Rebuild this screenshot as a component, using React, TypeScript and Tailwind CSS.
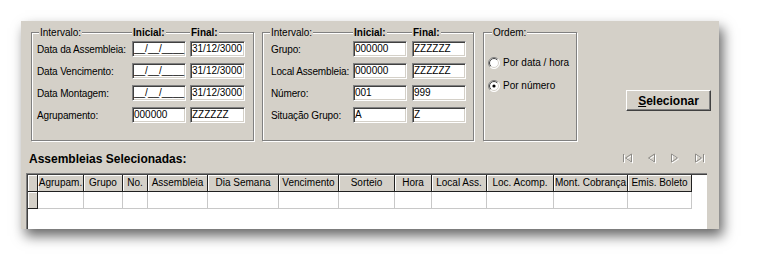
import React from 'react';

const fieldBox =
    'h-[16px] bg-white border border-[#808080] border-b-white border-r-white shadow-[inset_1px_1px_0_#404040,inset_-1px_-1px_0_#d4d0c8] pl-[1px] leading-[13px] text-[10px] overflow-hidden whitespace-nowrap';

const groupBox = 'border border-[#808080] shadow-[inset_1px_1px_0_#fff,1px_1px_0_#fff] h-[109px]';

const Field = ({ value }: { value: string }) => <div className={fieldBox}>{value}</div>;

const Label = ({ children }: { children: React.ReactNode }) => (
    <span className="whitespace-nowrap tracking-[-0.15px]">{children}</span>
);

const Legend = ({ children, bold }: { children: React.ReactNode; bold?: boolean }) => (
    <span className={`w-fit bg-[#d4d0c8] px-[1px] ${bold ? 'font-bold' : ''}`}>{children}</span>
);

const Radio = ({ checked }: { checked?: boolean }) => (
    <svg width="12" height="12" viewBox="0 0 12 12">
        <defs>
            <linearGradient id="ro" x1="0" y1="0" x2="1" y2="1">
                <stop offset="0.45" stopColor="#808080" />
                <stop offset="0.55" stopColor="#ffffff" />
            </linearGradient>
            <linearGradient id="ri" x1="0" y1="0" x2="1" y2="1">
                <stop offset="0.45" stopColor="#404040" />
                <stop offset="0.55" stopColor="#d4d0c8" />
            </linearGradient>
        </defs>
        <circle cx="6" cy="6" r="5.5" fill="white" stroke="url(#ro)" strokeWidth="1" />
        <circle cx="6" cy="6" r="4.5" fill="white" stroke="url(#ri)" strokeWidth="1" />
        {checked && <circle cx="6" cy="6" r="1.6" fill="black" />}
    </svg>
);

const NavIcon = ({ kind }: { kind: 'first' | 'prev' | 'next' | 'last' }) => {
    const shapes: Record<string, React.ReactNode> = {
        first: (
            <>
                <path d="M1.5 1 V9" />
                <path d="M9.5 1 L3.5 5 L9.5 9 Z" />
            </>
        ),
        prev: <path d="M8.5 1 L2.5 5 L8.5 9 Z" />,
        next: <path d="M1.5 1 L7.5 5 L1.5 9 Z" />,
        last: (
            <>
                <path d="M1.5 1 L7.5 5 L1.5 9 Z" />
                <path d="M9.5 1 V9" />
            </>
        ),
    };
    return (
        <svg width="11" height="11" viewBox="0 0 11 11" fill="none">
            <g stroke="#ffffff" transform="translate(1 1)">{shapes[kind]}</g>
            <g stroke="#8c8a86">{shapes[kind]}</g>
        </svg>
    );
};

const columns: [string, number][] = [
    ['Agrupam.', 46],
    ['Grupo', 39],
    ['No.', 25],
    ['Assembleia', 60],
    ['Dia Semana', 71],
    ['Vencimento', 60],
    ['Sorteio', 56],
    ['Hora', 37],
    ['Local Ass.', 55],
    ['Loc. Acomp.', 67],
    ['Mont. Cobrança', 74],
    ['Emis. Boleto', 64],
];

export default function App() {
    return (
        <div className="min-h-screen bg-white pt-[21px] pl-[21px] font-['Liberation_Sans',Arial,sans-serif] text-[10px] text-black">
            <div className="w-[698px] h-[208px] bg-[#d4d0c8] shadow-[4px_7px_12px_rgba(0,0,0,0.6)] flex flex-col overflow-hidden">
                <div className="flex pt-[11px] pl-[10px]">
                    {/* Intervalo de datas */}
                    <div className={`${groupBox} w-[223px] pl-[5px]`}>
                        <div className="grid grid-cols-[91px_54px_55px] gap-x-[4px] -mt-[7px] h-[13px] leading-[13px]">
                            <span className="ml-[2px] w-fit bg-[#d4d0c8] px-[1px]">Intervalo:</span>
                            <Legend bold>Inicial:</Legend>
                            <Legend bold>Final:</Legend>
                        </div>
                        <div className="grid grid-cols-[91px_54px_55px] gap-x-[4px] gap-y-[6px] mt-[2px] items-center">
                            <Label>Data da Assembleia:</Label>
                            <Field value="__/__/____" />
                            <Field value="31/12/3000" />
                            <Label>Data Vencimento:</Label>
                            <Field value="__/__/____" />
                            <Field value="31/12/3000" />
                            <Label>Data Montagem:</Label>
                            <Field value="__/__/____" />
                            <Field value="31/12/3000" />
                            <Label>Agrupamento:</Label>
                            <Field value="000000" />
                            <Field value="ZZZZZZ" />
                        </div>
                    </div>

                    {/* Intervalo de grupos */}
                    <div className={`${groupBox} ml-[8px] w-[212px] pl-[8px]`}>
                        <div className="grid grid-cols-[77px_54px_54px] gap-x-[5px] -mt-[7px] h-[13px] leading-[13px]">
                            <span className="-ml-[1px] w-fit bg-[#d4d0c8] px-[1px]">Intervalo:</span>
                            <Legend bold>Inicial:</Legend>
                            <Legend bold>Final:</Legend>
                        </div>
                        <div className="grid grid-cols-[77px_54px_54px] gap-x-[5px] gap-y-[6px] mt-[2px] items-center">
                            <Label>Grupo:</Label>
                            <Field value="000000" />
                            <Field value="ZZZZZZ" />
                            <Label>Local Assembleia:</Label>
                            <Field value="000000" />
                            <Field value="ZZZZZZ" />
                            <Label>Número:</Label>
                            <Field value="001" />
                            <Field value="999" />
                            <Label>Situação Grupo:</Label>
                            <Field value="A" />
                            <Field value="Z" />
                        </div>
                    </div>

                    {/* Ordem */}
                    <div className={`${groupBox} ml-[9px] w-[94px] pl-[4px]`}>
                        <div className="-mt-[7px] h-[13px] leading-[13px] pl-[4px]">
                            <Legend>Ordem:</Legend>
                        </div>
                        <div className="flex flex-col gap-[10px] mt-[17px]">
                            <label className="flex items-center gap-[3px] h-[13px]">
                                <Radio />
                                <span>Por data / hora</span>
                            </label>
                            <label className="flex items-center gap-[3px] h-[13px]">
                                <Radio checked />
                                <span>Por número</span>
                            </label>
                        </div>
                    </div>

                    <button className="ml-[49px] mt-[58px] w-[85px] h-[21px] bg-[#d4d0c8] border border-white border-r-[#404040] border-b-[#404040] shadow-[inset_-1px_-1px_0_#808080] text-[12px] font-bold leading-[18px]">
                        <span className="underline">S</span>elecionar
                    </button>
                </div>

                <div className="flex items-center justify-between pl-[8px] pr-[14px] mt-[11px] h-[14px]">
                    <h3 className="text-[12px] font-bold leading-[14px]">Assembleias Selecionadas:</h3>
                    <div className="flex items-center gap-[13px] mt-[-1px]">
                        <NavIcon kind="first" />
                        <NavIcon kind="prev" />
                        <NavIcon kind="next" />
                        <NavIcon kind="last" />
                    </div>
                </div>

                <div className="ml-[5px] mt-[7px] w-[681px] flex-1 bg-white border-l border-t border-[#808080]">
                    <div className="h-full border-l border-t border-[#404040]">
                        <div className="flex h-[17px]">
                            <div className="w-[10px] bg-[#d4d0c8] border-r border-b border-[#202020] shadow-[inset_1px_1px_0_#fff]" />
                            {columns.map(([name, w]) => (
                                <div
                                    key={name}
                                    style={{ width: w }}
                                    className="shrink-0 bg-[#d4d0c8] border-r border-b border-[#202020] shadow-[inset_1px_1px_0_#fff] text-center leading-[16px] whitespace-nowrap overflow-hidden">
                                    {name}
                                </div>
                            ))}
                        </div>
                        <div className="flex h-[17px]">
                            <div className="w-[10px] bg-[#d4d0c8] border-r border-b border-[#202020] shadow-[inset_1px_1px_0_#fff]" />
                            {columns.map(([name, w]) => (
                                <div key={name} style={{ width: w }} className="shrink-0 border-r border-b border-[#c8c8c8]" />
                            ))}
                        </div>
                    </div>
                </div>
            </div>
        </div>
    );
}
